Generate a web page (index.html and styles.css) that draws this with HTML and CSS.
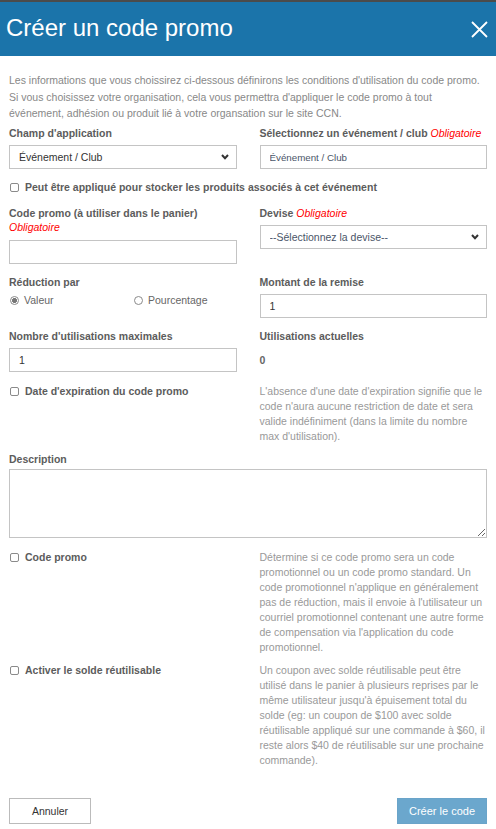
FILE: index.html
```html
<!DOCTYPE html>
<html lang="fr">
<head>
    <meta charset="UTF-8">
    <meta name="viewport" content="width=device-width, initial-scale=1.0">
    <title>Créer un code promo</title>
    <link rel="stylesheet" href="styles.css">
</head>
<body>
    <div class="modal">
        <div class="modal__header">
            <h1 class="modal__title">Créer un code promo</h1>
            <button class="modal__close" aria-label="Fermer">
                <svg width="17" height="17" viewBox="0 0 17 17">
                    <path d="M1 1 L16 16 M16 1 L1 16" stroke="#fff" stroke-width="1.8" fill="none"/>
                </svg>
            </button>
        </div>

        <div class="modal__body">
            <p class="intro">Les informations que vous choissirez ci-dessous définirons les conditions d'utilisation du code promo. Si vous choisissez votre organisation, cela vous permettra d'appliquer le code promo à tout événement, adhésion ou produit lié à votre organsation sur le site CCN.</p>

            <div class="row row--first">
                <div class="field">
                    <label class="field__label">Champ d'application</label>
                    <div class="select">
                        <select class="input input--dark">
                            <option>Événement / Club</option>
                        </select>
                        <svg class="select__arrow" width="8" height="6" viewBox="0 0 8 6">
                            <path d="M1 1 L4 4.2 L7 1" stroke="#333" stroke-width="2" fill="none"/>
                        </svg>
                    </div>
                </div>
                <div class="field">
                    <label class="field__label">Sélectionnez un événement / club <span class="required">Obligatoire</span></label>
                    <input class="input input--small" type="text" value="Événement / Club">
                </div>
            </div>

            <label class="check check--wide">
                <input type="checkbox"> Peut être appliqué pour stocker les produits associés à cet événement
            </label>

            <div class="row row--spaced">
                <div class="field">
                    <label class="field__label">Code promo (à utiliser dans le panier)<br><span class="required">Obligatoire</span></label>
                    <input class="input input--gap" type="text">
                </div>
                <div class="field">
                    <label class="field__label">Devise <span class="required">Obligatoire</span></label>
                    <div class="select">
                        <select class="input">
                            <option>--Sélectionnez la devise--</option>
                        </select>
                        <svg class="select__arrow" width="8" height="6" viewBox="0 0 8 6">
                            <path d="M1 1 L4 4.2 L7 1" stroke="#333" stroke-width="2" fill="none"/>
                        </svg>
                    </div>
                </div>
            </div>

            <div class="row row--tight">
                <div class="field">
                    <label class="field__label">Réduction par</label>
                    <div class="radios">
                        <label class="radio"><input type="radio" name="reduction" checked> Valeur</label>
                        <label class="radio"><input type="radio" name="reduction"> Pourcentage</label>
                    </div>
                </div>
                <div class="field">
                    <label class="field__label">Montant de la remise</label>
                    <input class="input" type="text" value="1">
                </div>
            </div>

            <div class="row row--tight">
                <div class="field">
                    <label class="field__label">Nombre d'utilisations maximales</label>
                    <input class="input" type="text" value="1">
                </div>
                <div class="field">
                    <label class="field__label">Utilisations actuelles</label>
                    <div class="static-value">0</div>
                </div>
            </div>

            <div class="row row--help row--date">
                <label class="check"><input type="checkbox"> Date d'expiration du code promo</label>
                <p class="help">L'absence d'une date d'expiration signifie que le code n'aura aucune restriction de date et sera valide indéfiniment (dans la limite du nombre max d'utilisation).</p>
            </div>

            <div class="field field--description">
                <label class="field__label">Description</label>
                <textarea class="textarea"></textarea>
            </div>

            <div class="row row--help row--promo">
                <label class="check"><input type="checkbox"> Code promo</label>
                <p class="help">Détermine si ce code promo sera un code promotionnel ou un code promo standard. Un code promotionnel n'applique en généralement pas de réduction, mais il envoie à l'utilisateur un courriel promotionnel contenant une autre forme de compensation via l'application du code promotionnel.</p>
            </div>

            <div class="row row--help row--balance">
                <label class="check"><input type="checkbox"> Activer le solde réutilisable</label>
                <p class="help">Un coupon avec solde réutilisable peut être utilisé dans le panier à plusieurs reprises par le même utilisateur jusqu'à épuisement total du solde (eg: un coupon de $100 avec solde réutilisable appliqué sur une commande à $60, il reste alors $40 de réutilisable sur une prochaine commande).</p>
            </div>
        </div>

        <div class="modal__footer">
            <button class="btn btn--cancel">Annuler</button>
            <button class="btn btn--primary">Créer le code</button>
        </div>
    </div>
</body>
</html>
```

FILE: styles.css
```css
body {
    margin: 0;
    font-family: "Liberation Sans", Arial, sans-serif;
    background-color: #fff;
    color: #5c5c5c;
}
.modal {
    width: 496px;
}
.modal__header {
    height: 54px;
    border-top: 2px solid #4b4b4b;
    background-color: #1b74aa;
    display: flex;
    align-items: center;
    justify-content: space-between;
    padding: 0 8px 0 6px;
}
.modal__title {
    margin: 0;
    font-size: 24px;
    font-weight: normal;
    color: #fff;
    line-height: 1;
    padding-bottom: 2px;
}
.modal__close {
    background: none;
    border: none;
    padding: 0;
    width: 17px;
    height: 17px;
    display: flex;
    cursor: pointer;
}
.modal__body {
    padding: 16px 9px 0;
}
.intro {
    margin: 0;
    font-size: 10.5px;
    line-height: 16.5px;
    color: #888;
}
.row {
    display: grid;
    grid-template-columns: 1fr 1fr;
    column-gap: 23px;
}
.row--first { margin-top: 4.5px; }
.row--spaced { margin-top: 12px; }
.row--tight { margin-top: 11px; }
.row--date { margin-top: 11.5px; }
.row--promo { margin-top: 12px; }
.row--balance { margin-top: 7.5px; }
.field {
    display: flex;
    flex-direction: column;
}
.field__label {
    font-size: 10.5px;
    line-height: 14px;
    font-weight: bold;
    color: #5c5c5c;
}
.required {
    color: #f00;
    font-style: italic;
    font-weight: normal;
}
.input {
    box-sizing: border-box;
    height: 24px;
    width: 100%;
    margin-top: 5px;
    padding: 0 9px;
    border: 1px solid #c4c4c4;
    border-radius: 0;
    background: #fff;
    font-family: inherit;
    font-size: 10.5px;
    color: #333;
    outline: none;
}
.input--small {
    font-size: 9.75px;
    color: #4a5568;
}
.input--gap {
    margin-top: 6px;
}
select.input {
    appearance: none;
    -webkit-appearance: none;
    color: #4a5568;
}
select.input--dark {
    color: #333;
}
.select {
    position: relative;
}
.select__arrow {
    position: absolute;
    right: 8px;
    top: 14px;
}
.check {
    display: flex;
    align-items: center;
    font-size: 10.5px;
    line-height: 15px;
    font-weight: bold;
    color: #5c5c5c;
    align-self: start;
}
.check--wide {
    margin-top: 11px;
    line-height: 14px;
}
.check input {
    appearance: none;
    -webkit-appearance: none;
    box-sizing: border-box;
    width: 9px;
    height: 9px;
    margin: 0 6px 0 1px;
    border: 1px solid #8a8a8a;
    border-radius: 2px;
    background: #fff;
}
.radios {
    display: grid;
    grid-template-columns: 124px 1fr;
    margin-top: 4px;
}
.radio {
    display: flex;
    align-items: center;
    font-size: 10.5px;
    line-height: 14px;
    color: #666;
}
.radio input {
    appearance: none;
    -webkit-appearance: none;
    box-sizing: border-box;
    width: 9px;
    height: 9px;
    margin: 0 5px 0 1px;
    border: 1px solid #8a8a8a;
    border-radius: 50%;
    background: #fff;
}
.radio input:checked {
    background: radial-gradient(circle, #777 0 2.2px, #fff 2.7px);
}
.static-value {
    margin-top: 5px;
    font-size: 10.5px;
    line-height: 24px;
    font-weight: bold;
    color: #666;
}
.help {
    margin: 0;
    font-size: 10.5px;
    line-height: 15px;
    color: #999;
}
.field--description {
    margin-top: 8.5px;
}
.textarea {
    box-sizing: border-box;
    width: 100%;
    height: 69px;
    margin-top: 3px;
    border: 1px solid #c4c4c4;
    border-radius: 0;
    font-family: inherit;
    outline: none;
    display: block;
}
.modal__footer {
    display: flex;
    justify-content: space-between;
    padding: 30.5px 9px 0;
}
.btn {
    box-sizing: border-box;
    height: 26px;
    font-family: inherit;
    font-size: 10.5px;
    border-radius: 0;
    cursor: pointer;
}
.btn--cancel {
    width: 82px;
    background: #fff;
    border: 1px solid #bbb;
    color: #333;
}
.btn--primary {
    width: 90px;
    background: #6ba7cd;
    border: 1px solid #6aa4c9;
    color: #fff;
    font-size: 11px;
}
```
